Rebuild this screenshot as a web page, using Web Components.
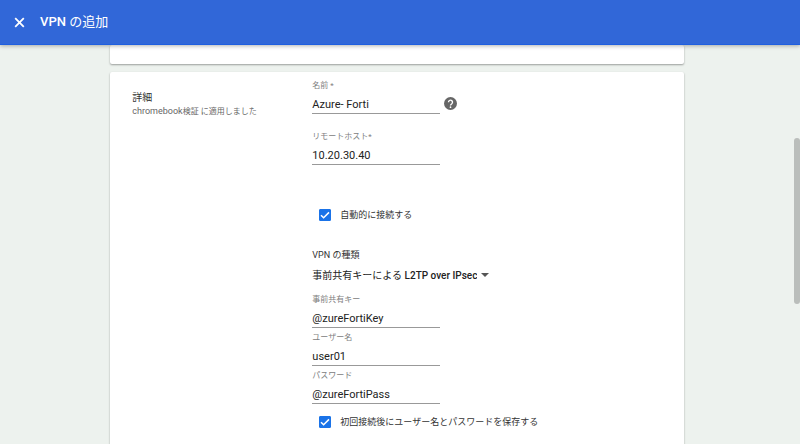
<!DOCTYPE html>
<html lang="ja">
<head>
<meta charset="utf-8">
<title>VPN の追加</title>
<style>
html, body { height: 100%; margin: 0; }
body { font-family: Roboto, "Noto Sans CJK JP", sans-serif; background: #edf2ee; color: #333; overflow: hidden; }
</style>
</head>
<body>
<vpn-page></vpn-page>
<script>
const define = (name, html, setup) => customElements.define(name, class extends HTMLElement {
  constructor() {
    super();
    const t = document.createElement('template');
    t.innerHTML = html;
    this.attachShadow({ mode: 'open' }).append(t.content.cloneNode(true));
  }
  connectedCallback() { if (setup) setup(this, this.shadowRoot); }
});

define('app-header', `
<style>
:host { display: flex; align-items: center; gap: 14px; height: 45px; padding: 0 13px; box-sizing: border-box; flex: none;
  background: #3167d8; border-bottom: 1px solid #1f5fe0; color: #fff; box-shadow: 0 1px 4px rgba(0,0,0,.3); position: relative; z-index: 1; }
button { display: block; width: 13px; height: 13px; padding: 0; border: 0; background: none; color: inherit; }
svg { display: block; }
h1 { margin: 0; font: 400 13px/20px "Roboto Medium", Roboto, "Noto Sans CJK JP", sans-serif; }
</style>
<button type="button" aria-label="閉じる"><svg width="13" height="13" viewBox="0 0 13 13" fill="none" stroke="currentColor" stroke-width="1.8"><path d="M2.2 2.2l8.6 8.6M10.8 2.2l-8.6 8.6"/></svg></button>
<h1><slot></slot></h1>`);

define('content-card', `
<style>
:host { display: block; background: #fff; border-radius: 2px; box-shadow: 0 1px 2px rgba(0,0,0,.35); }
</style><slot></slot>`);

define('section-title', `
<style>
:host { display: block; padding-top: 15px; }
h2 { margin: 0; font-size: 10px; line-height: 14px; font-weight: 400; color: #333; }
p { margin: 0; font-size: 8px; line-height: 12px; color: #666; }
::slotted([slot=org]) { font-size: 9px; }
</style><h2><slot></slot></h2><p><slot name="org"></slot><slot name="note"></slot></p>`);

define('text-field', `
<style>
:host { display: flex; align-items: center; gap: 4px; }
.box { width: 128px; }
label { display: block; font-size: 8px; line-height: 19px; color: #808080; }
input { display: block; box-sizing: border-box; width: 100%; height: 19px; padding: 1px 0 0; border: 0; border-bottom: 1px solid #999;
  border-radius: 0; background: none; font: 11px Roboto, "Noto Sans CJK JP", sans-serif; color: #222; outline: 0; }
</style>
<div class="box"><label for="f"><slot></slot></label><input id="f" type="text"></div><slot name="help"></slot>`,
(el, root) => { root.querySelector('input').value = el.getAttribute('value'); });

define('help-icon', `
<style>
:host { display: block; padding-top: 17px; }
button { display: block; padding: 0; border: 0; background: none; }
svg { display: block; }
</style>
<button type="button" aria-label="ヘルプ"><svg width="13" height="13" viewBox="0 0 13 13"><circle cx="6.500" cy="6.500" r="6.500" fill="#666"/><path d="M4.500 5.200a2 2 0 1 1 3.300 1.500c-.8.6-1.300 1-1.300 1.900" fill="none" stroke="#fff" stroke-width="1.400"/><circle cx="6.500" cy="10.200" r=".85" fill="#fff"/></svg></button>`);

define('check-field', `
<style>
:host { display: flex; align-items: center; height: 24px; padding-left: 7px; }
label { display: flex; align-items: center; gap: 9px; font-size: 9px; line-height: 16px; color: #333; }
input { appearance: none; width: 12px; height: 12px; margin: 0; border: 1px solid #1a73e8; border-radius: 1px; flex: none; }
input:checked { background: #1a73e8 url("data:image/svg+xml,%3Csvg xmlns='http://www.w3.org/2000/svg' viewBox='0 0 10 10'%3E%3Cpath d='M1 5.200l2.600 2.600L9 2.400' fill='none' stroke='white' stroke-width='1.500'/%3E%3C/svg%3E") center / 10px 10px no-repeat; }
</style>
<label><input type="checkbox" checked><slot></slot></label>`);

define('type-select', `
<style>
:host { display: block; }
label { display: block; font-size: 9px; line-height: 18px; color: #333; }
.wrap { display: flex; align-items: center; gap: 4px; height: 24px; }
select { appearance: none; field-sizing: content; margin: 0; padding: 0; border: 0; background: none; font: 400 10px/16px "Roboto Medium", Roboto, "Noto Sans CJK JP", sans-serif; color: #222; }
i { width: 0; margin-bottom: 2px; border: 4px solid transparent; border-top-color: #555; border-bottom: 0; }
</style>
<label for="s"><slot></slot></label>
<div class="wrap"><select id="s"><option>事前共有キーによる L2TP over IPsec</option></select><i></i></div>`);

define('scroll-rail', `
<style>
:host { display: grid; grid-template-rows: 93fr 166fr 140fr; width: 6px; flex: none; }
span { grid-row: 2; background: #babebb; border-radius: 3px; }
</style><span></span>`);

define('vpn-page', `
<style>
:host { display: flex; flex-direction: column; height: 100%; overflow: hidden; }
.body { display: flex; flex: 1; min-height: 0; }
main { flex: 1; display: flex; flex-direction: column; align-items: center; gap: 8px; overflow: hidden; }
content-card { width: 72.2%; flex: none; box-sizing: border-box; }
.prev { padding-top: 19px; }
.details { padding: 4px 22px 40px; }
.grid { display: grid; grid-template-columns: 180px 1fr; }
.host { margin-top: 13px; }
.auto { margin-top: 38px; }
type-select { margin-top: 19px; margin-bottom: 2px; }
.save { margin-top: 6px; }
</style>
<app-header>VPN の追加</app-header>
<div class="body">
<main>
<content-card class="prev"></content-card>
<content-card class="details"><div class="grid">
<section-title>詳細<span slot="org">chromebook</span><span slot="note">検証 に適用しました</span></section-title>
<form>
<text-field value="Azure- Forti">名前 *<help-icon slot="help"></help-icon></text-field>
<text-field class="host" value="10.20.30.40">リモートホスト*</text-field>
<check-field class="auto">自動的に接続する</check-field>
<type-select>VPN の種類</type-select>
<text-field value="@zureFortiKey">事前共有キー</text-field>
<text-field value="user01">ユーザー名</text-field>
<text-field value="@zureFortiPass">パスワード</text-field>
<check-field class="save">初回接続後にユーザー名とパスワードを保存する</check-field>
</form>
</div></content-card>
</main>
<scroll-rail></scroll-rail>
</div>`);
</script>
</body>
</html>
